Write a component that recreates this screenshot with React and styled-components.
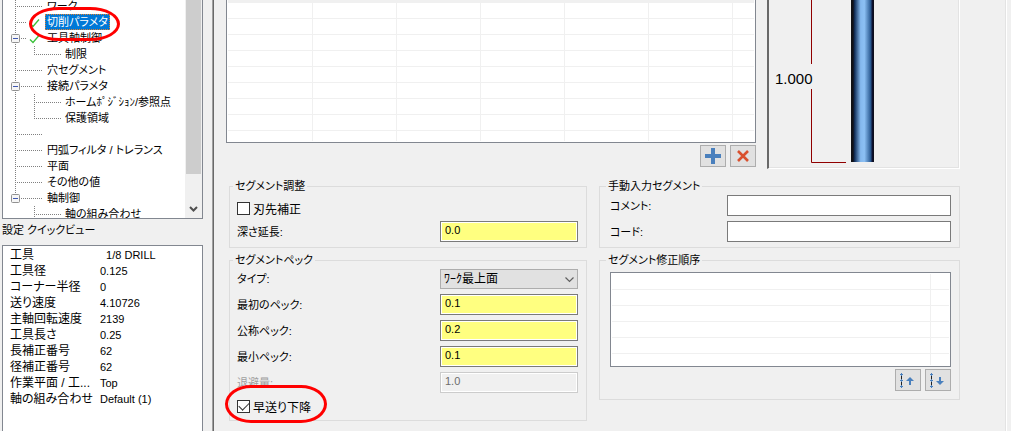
import React from 'react'
import styled, { createGlobalStyle } from 'styled-components'

const treeItems = [
    { label: 'ワーク' },
    { label: '切削パラメタ', checked: true, selected: true, ringed: true },
    { label: '工具軸制御', checked: true, open: true },
    { label: '制限', child: true, last: true, trunk: true },
    { label: '穴セグメント' },
    { label: '接続パラメタ', open: true },
    { label: 'ホームﾎﾟｼﾞｼｮﾝ/参照点', child: true, trunk: true },
    { label: '保護領域', child: true, last: true, trunk: true },
    { label: '' },
    { label: '円弧フィルタ / トレランス' },
    { label: '平面' },
    { label: 'その他の値' },
    { label: '軸制御', open: true, end: true },
    { label: '軸の組み合わせ', child: true },
]

const quickView = [
    ['工具', '\u00a0\u00a01/8 DRILL'],
    ['工具径', '0.125'],
    ['コーナー半径', '0'],
    ['送り速度', '4.10726'],
    ['主軸回転速度', '2139'],
    ['工具長さ', '0.25'],
    ['長補正番号', '62'],
    ['径補正番号', '62'],
    ['作業平面 / 工...', 'Top'],
    ['軸の組み合わせ', 'Default (1)'],
]

const Branch = ({ item }) => {
    const { child, last, trunk, open, end, checked } = item
    const x = child ? 34 : 15
    const stop = child ? 61 : checked ? 26 : 43
    return (
        <BranchSvg width={child ? 60 : 42} height="16" viewBox={child ? '3 0 60 16' : '3 0 42 16'} aria-hidden="true">
            <g stroke="#808080" strokeDasharray="1 1" fill="none">
                {(!child || trunk) && <path d={`M15.5 0V${end ? 8 : 16}`} />}
                {child && <path d={`M34.5 0V${last ? 8 : 16}`} />}
                <path d={`M${x} 8.5H${stop}`} />
            </g>
            {open && (
                <g>
                    <rect x="11.5" y="4.5" width="8" height="8" rx="1" fill="#f6f6f6" stroke="#919191" />
                    <path d="M13 8.5h5" stroke="#4058b0" />
                </g>
            )}
            {checked && <path d="M30 9.5l3 3 6-7" stroke="#38c038" fill="none" strokeWidth="1.3" />}
        </BranchSvg>
    )
}

const GridList = ({ label, columns, rows, header }) => (
    <ListTable aria-label={label}>
        <colgroup>
            {columns.map((w, i) => <Column key={i} $width={w} />)}
            <col />
        </colgroup>
        {header && (
            <thead>
                <tr>{[...columns, 0].map((_, i) => <HeadCell key={i} />)}</tr>
            </thead>
        )}
        <tbody>
            {Array.from({ length: rows }, (_, r) => (
                <tr key={r}>{[...columns, 0].map((_, i) => <Cell key={i} />)}</tr>
            ))}
            <tr>{[...columns, 0].map((_, i) => <TailCell key={i} />)}</tr>
        </tbody>
    </ListTable>
)

const Field = ({ id, label, value = '', disabled, width, color }) => (
    <Row>
        <Label htmlFor={id} $disabled={disabled}>{label}</Label>
        <Input id={id} defaultValue={value} disabled={disabled} $width={width} $color={color} />
    </Row>
)

const OrderIcon = ({ down }) => (
    <svg width="18" height="16" viewBox="0 0 18 16" aria-hidden="true">
        <path d="M2.5 1v14" stroke="#222" />
        <path d="M1 2.5h3M2.5 1v3M1 8.5h3M2.5 7v3M1 14.5h3M2.5 13v3" stroke="#4a80bd" />
        <path d={down ? 'M10 5h2v4h3l-4 4-4-4h3z' : 'M11 5l4 4h-3v4h-2V9H7z'} fill="#4a80bd" />
    </svg>
)

const ToolPreview = () => (
    <svg width="189" height="167" viewBox="0 0 189 167" role="img" aria-label="工具">
        <defs>
            <linearGradient id="shaft">
                <stop offset="0" stopColor="#101014" />
                <stop offset="0.09" stopColor="#101018" />
                <stop offset="0.16" stopColor="#12305c" />
                <stop offset="0.42" stopColor="#84b8ee" />
                <stop offset="0.58" stopColor="#8cc0f4" />
                <stop offset="0.85" stopColor="#2c5c94" />
                <stop offset="0.93" stopColor="#0c1030" />
                <stop offset="1" stopColor="#101014" />
            </linearGradient>
        </defs>
        <path d="M42.5 0v64M42.5 89v73.5H77" stroke="#900000" fill="none" />
        <rect x="82" y="0" width="23" height="162" fill="url(#shaft)" />
        <DimensionText x="6" y="84">1.000</DimensionText>
    </svg>
)

const App = () => {
    return (
        <Window>
            <GlobalStyle />
            <Sidebar>
                <TreeBox>
                    <Tree>
                        {treeItems.map((item, i) => (
                            <TreeRow key={i}>
                                <Branch item={item} />
                                <TreeLabel $selected={item.selected}>{item.label}</TreeLabel>
                                {item.ringed && <TreeRing />}
                            </TreeRow>
                        ))}
                    </Tree>
                    <Scrollbar>
                        <Thumb />
                        <svg width="9" height="6" viewBox="0 0 9 6" aria-hidden="true">
                            <path d="M1 1l3.5 3.5L8 1" fill="none" stroke="#505050" strokeWidth="2" />
                        </svg>
                    </Scrollbar>
                </TreeBox>
                <PanelTitle>設定 クイックビュー</PanelTitle>
                <QuickBox>
                    <QuickTable>
                        <tbody>
                            {quickView.map(([name, value]) => (
                                <tr key={name}>
                                    <QuickName scope="row">{name}</QuickName>
                                    <QuickValue>{value}</QuickValue>
                                </tr>
                            ))}
                        </tbody>
                    </QuickTable>
                </QuickBox>
            </Sidebar>
            <Main>
                <TopArea>
                    <Segments>
                        <ListBox $height={143} $openTop>
                            <GridList label="セグメント" columns={[85, 84, 84, 84, 84, 84]} rows={8} header />
                        </ListBox>
                        <Buttons>
                            <IconButton aria-label="追加">
                                <svg width="16" height="16" viewBox="0 0 16 16" aria-hidden="true">
                                    <path d="M8 0v16M0 8h16" stroke="#4a80bd" strokeWidth="4" />
                                </svg>
                            </IconButton>
                            <IconButton aria-label="削除">
                                <svg width="12" height="12" viewBox="0 0 12 12" aria-hidden="true">
                                    <path d="M1 1l10 10M11 1L1 11" stroke="#d9512f" strokeWidth="2.6" />
                                </svg>
                            </IconButton>
                        </Buttons>
                    </Segments>
                    <Preview>
                        <ToolPreview />
                    </Preview>
                </TopArea>
                <Groups>
                    <GroupColumn>
                        <Group>
                            <Legend $inset={3}>セグメント調整</Legend>
                            <Body $top={6} $bottom={5} $left={7} $gap={4}>
                                <CheckLabel $height={18}>
                                    <CheckBox type="checkbox" />
                                    刃先補正
                                </CheckLabel>
                                <Field id="depth" label="深さ延長:" value="0.0" width={138} color="#ffff80" />
                            </Body>
                        </Group>
                        <Group>
                            <Legend $inset={3}>セグメントペック</Legend>
                            <Body $top={2} $bottom={6} $left={7} $gap={5}>
                                <Row>
                                    <Label htmlFor="type">タイプ:</Label>
                                    <SelectWrap>
                                        <Select id="type">
                                            <option>ﾜｰｸ最上面</option>
                                        </Select>
                                        <Chevron width="9" height="6" viewBox="0 0 9 6" aria-hidden="true">
                                            <path d="M0.5 0.5l4 4 4-4" fill="none" stroke="#606060" strokeWidth="1.2" />
                                        </Chevron>
                                    </SelectWrap>
                                </Row>
                                <Field id="first" label="最初のペック:" value="0.1" width={138} color="#ffff80" />
                                <Field id="nominal" label="公称ペック:" value="0.2" width={138} color="#ffff80" />
                                <Field id="minimum" label="最小ペック:" value="0.1" width={138} color="#ffff80" />
                                <Field id="retract" label="退避量:" value="1.0" width={138} color="#f0f0f0" disabled />
                                <CheckLabel $height={16}>
                                    <CheckBox type="checkbox" defaultChecked />
                                    早送り下降
                                    <CheckRing />
                                </CheckLabel>
                            </Body>
                        </Group>
                    </GroupColumn>
                    <GroupColumn>
                        <Group>
                            <Legend $inset={6}>手動入力セグメント</Legend>
                            <Body $top={2} $bottom={5} $left={10} $gap={5}>
                                <Field id="comment" label="コメント:" width={224} color="#ffffff" />
                                <Field id="code" label="コード:" width={224} color="#ffffff" />
                            </Body>
                        </Group>
                        <Group>
                            <Legend $inset={6}>セグメント修正順序</Legend>
                            <Body $top={5} $bottom={8} $left={10} $gap={2}>
                                <ListBox $height={95}>
                                    <GridList label="セグメント修正順序" columns={[319]} rows={5} />
                                </ListBox>
                                <Buttons>
                                    <IconButton aria-label="上へ"><OrderIcon /></IconButton>
                                    <IconButton aria-label="下へ"><OrderIcon down /></IconButton>
                                </Buttons>
                            </Body>
                        </Group>
                    </GroupColumn>
                </Groups>
            </Main>
        </Window>
    )
}

const GlobalStyle = createGlobalStyle`
    * {
        box-sizing: border-box;
    }
    body {
        margin: 0;
        background-color: #f0f0f0;
        color: #000000;
    }
    body, input, select, button {
        font-family: "Liberation Sans", "Noto Sans CJK JP", sans-serif;
        font-size: 12px;
        font-feature-settings: "palt";
    }
`

const Window = styled.div`
    display: flex;
    height: 100vh;
    overflow: hidden;
    padding-right: 4px;
`

const Sidebar = styled.aside`
    display: flex;
    flex-direction: column;
    flex: 0 0 214px;
    min-width: 0;
    padding: 0 10px 0 2px;
    border-right: 1px solid #696969;
    box-shadow: inset -1px 0 0 #a0a0a0;
`

const TreeBox = styled.div`
    display: flex;
    flex: 0 0 219px;
    overflow: hidden;
    background-color: #ffffff;
    border: 1px solid #828790;
    border-top: none;
`

const Tree = styled.ul`
    flex: 1;
    min-width: 0;
    list-style: none;
    margin: -2px 0 0;
    padding: 0;
`

const TreeRow = styled.li`
    position: relative;
    display: flex;
    height: 16px;
`

const BranchSvg = styled.svg`
    flex: none;
`

const TreeLabel = styled.span`
    padding: 0 2px;
    font-size: 11px;
    line-height: 16px;
    white-space: nowrap;
    color: ${({ $selected }) => ($selected ? '#ffffff' : '#000000')};
    background-color: ${({ $selected }) => ($selected ? '#0078d7' : 'transparent')};
    outline: ${({ $selected }) => ($selected ? '1px dotted #e08030' : 'none')};
    outline-offset: -1px;
`

const Ring = styled.span`
    position: absolute;
    z-index: 1;
    border: 3px solid #ff0000;
    pointer-events: none;
`

const TreeRing = styled(Ring)`
    left: 26px;
    top: -7px;
    width: 91px;
    height: 34px;
    border-radius: 30px / 17px;
`

const CheckRing = styled(Ring)`
    left: -12px;
    top: -13px;
    width: 102px;
    height: 38px;
    border-radius: 26px / 19px;
`

const Scrollbar = styled.div`
    display: flex;
    flex-direction: column;
    justify-content: space-between;
    align-items: center;
    flex: 0 0 17px;
    padding-bottom: 6px;
    background-color: #f0f0f0;
`

const Thumb = styled.div`
    width: 15px;
    height: 174px;
    background-color: #cdcdcd;
`

const PanelTitle = styled.div`
    height: 26px;
    font-size: 11px;
    line-height: 22px;
`

const QuickBox = styled.div`
    flex: 1;
    padding: 1px 7px;
    overflow: hidden;
    background-color: #ffffff;
    border: 1px solid #828790;
    border-bottom: none;
`

const QuickTable = styled.table`
    width: 100%;
    table-layout: fixed;
    border-spacing: 0;
`

const QuickName = styled.th`
    width: 90px;
    height: 16px;
    padding: 0;
    font-weight: 400;
    line-height: 16px;
    text-align: left;
    white-space: nowrap;
`

const QuickValue = styled.td`
    padding: 0;
    font-size: 11px;
    line-height: 16px;
`

const Main = styled.main`
    flex: 1;
    min-width: 0;
    padding: 0 46px 0 12px;
    border-right: 1px solid #ffffff;
    box-shadow: inset -1px 0 0 #e3e3e3;
`

const TopArea = styled.section`
    display: flex;
    gap: 11px;
`

const Segments = styled.div`
    display: flex;
    flex-direction: column;
    flex: 1;
    gap: 2px;
    min-width: 0;
`

const ListBox = styled.div`
    height: ${({ $height }) => $height}px;
    padding: ${({ $openTop }) => ($openTop ? '0 1px 1px' : '1px')};
    overflow: hidden;
    background-color: #ffffff;
    border: 1px solid #828790;
    border-top-width: ${({ $openTop }) => ($openTop ? 0 : 1)}px;
`

const ListTable = styled.table`
    width: 100%;
    height: 100%;
    table-layout: fixed;
    border-spacing: 0;
`

const Column = styled.col`
    width: ${({ $width }) => $width}px;
`

const HeadCell = styled.th`
    height: 3px;
    padding: 0;
    background-color: #f0f0f0;
`

const Cell = styled.td`
    height: 16px;
    padding: 0;
    border-bottom: 1px solid #f0f0f0;
    border-right: 1px solid #f0f0f0;
    &:last-child {
        border-right: none;
    }
`

const TailCell = styled(Cell)`
    height: auto;
    border-bottom: none;
`

const Buttons = styled.div`
    display: flex;
    justify-content: flex-end;
    gap: 4px;
`

const IconButton = styled.button`
    display: flex;
    justify-content: center;
    align-items: center;
    width: 26px;
    height: 22px;
    padding: 0;
    background-color: #e1e1e1;
    border: 1px solid #adadad;
    &:hover {
        background-color: #e5f1fb;
        border-color: #0078d7;
    }
`

const Preview = styled.div`
    flex: 0 0 193px;
    height: 169px;
    border-left: 2px solid #696969;
    border-right: 1px solid #ffffff;
    border-bottom: 1px solid #ffffff;
    box-shadow: inset -1px -1px 0 #e3e3e3;
`

const DimensionText = styled.text`
    font-size: 15px;
`

const Groups = styled.section`
    display: grid;
    grid-template-columns: minmax(0, 358fr) minmax(0, 361fr);
    gap: 12px;
    padding: 10px 0 0 3px;
`

const GroupColumn = styled.div`
    display: flex;
    flex-direction: column;
    gap: 5px;
`

const Group = styled.fieldset`
    min-width: 0;
    margin: 0;
    padding: 0;
    border: 1px solid #dcdcdc;
`

const Legend = styled.legend`
    height: 14px;
    margin-left: ${({ $inset }) => $inset}px;
    padding: 0 2px;
    font-size: 11px;
    line-height: 14px;
`

const Body = styled.div`
    display: flex;
    flex-direction: column;
    gap: ${({ $gap }) => $gap}px;
    padding: ${({ $top, $bottom, $left }) => `${$top}px 8px ${$bottom}px ${$left}px`};
`

const Row = styled.div`
    display: flex;
    justify-content: space-between;
    align-items: center;
`

const Label = styled.label`
    font-size: 11px;
    line-height: 18px;
    color: ${({ $disabled }) => ($disabled ? '#a0a0a0' : '#000000')};
`

const Input = styled.input`
    width: ${({ $width }) => $width}px;
    height: 21px;
    padding: 0 4px 3px;
    font-size: 11px;
    background-color: ${({ $color }) => $color};
    border: 1px solid #7a7a7a;
    border-radius: 0;
    box-shadow: inset 0 0 0 1px #ffffff;
    &:disabled {
        color: #6d6d6d;
        border-color: #cccccc;
    }
`

const SelectWrap = styled.div`
    position: relative;
    display: flex;
    width: 138px;
`

const Select = styled.select`
    appearance: none;
    width: 100%;
    height: 20px;
    padding: 0 20px 0 3px;
    color: #000000;
    background-color: #e1e1e1;
    border: 1px solid #adadad;
    border-radius: 0;
`

const Chevron = styled.svg`
    position: absolute;
    right: 4px;
    top: 8px;
    pointer-events: none;
`

const CheckLabel = styled.label`
    position: relative;
    display: flex;
    align-items: center;
    gap: 3px;
    height: ${({ $height }) => $height}px;
`

const CheckBox = styled.input`
    appearance: none;
    display: grid;
    place-items: center;
    width: 13px;
    height: 13px;
    margin: 0;
    background-color: #ffffff;
    border: 1px solid #333333;
    &:checked::before {
        content: '';
        width: 9px;
        height: 5px;
        margin-bottom: 3px;
        border-left: 1px solid #333333;
        border-bottom: 1px solid #333333;
        transform: rotate(-45deg);
    }
`

export default App
